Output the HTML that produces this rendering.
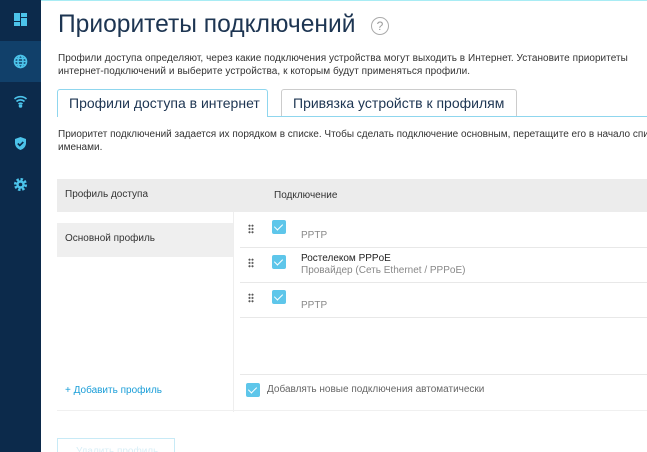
<!DOCTYPE html>
<html><head><meta charset="utf-8"><style>
*{margin:0;padding:0;box-sizing:border-box}
body{width:647px;height:452px;overflow:hidden;background:#fff;font-family:"Liberation Sans",sans-serif;position:relative;color:#333}
.sb{position:absolute;left:0;top:0;width:41px;height:452px;background:#0c2a4b}
.act{position:absolute;left:0;top:41px;width:41px;height:41px;background:#11406a}
.ic{position:absolute;left:13px;width:15px;height:15px}
.a{position:absolute;white-space:nowrap}
.cb{position:absolute;width:14px;height:14px;background:#5ec6ea;border-radius:2px}
.cb:after{content:"";position:absolute;left:4px;top:2px;width:4px;height:7px;border:solid #fff;border-width:0 1.5px 1.5px 0;transform:rotate(45deg)}
.dr{position:absolute;width:6px;height:10px;background-image:radial-gradient(circle,#555 0.9px,transparent 1.1px);background-size:3px 3.3px}
.hl{position:absolute;height:1px;background:#e8e8e8}
</style></head><body>
<div style="position:absolute;left:41px;top:0;right:0;height:1px;background:#a8ecf4"></div>
<div class="sb"></div><div class="act"></div>
<svg class="ic" style="top:12px" viewBox="0 0 15 15"><rect x="1" y="1" width="6" height="8" fill="#4cc3ea"/><rect x="8" y="1" width="6" height="4" fill="#4cc3ea"/><rect x="1" y="10" width="6" height="4" fill="#4cc3ea"/><rect x="8" y="6" width="6" height="8" fill="#4cc3ea"/></svg>
<svg class="ic" style="top:54px" viewBox="0 0 15 15" fill="none" stroke="#4cc3ea" stroke-width="1.6"><circle cx="7.5" cy="7.5" r="6"/><ellipse cx="7.5" cy="7.5" rx="2.5" ry="6"/><path d="M1.5 7.5h12M2.5 4.5h10M2.5 10.5h10"/></svg>
<svg class="ic" style="top:93px" viewBox="0 0 15 15" fill="none" stroke="#4cc3ea" stroke-width="1.6"><path d="M1.5 6a9 9 0 0 1 12 0M3.5 8.5a6 6 0 0 1 8 0M5.5 11a3 3 0 0 1 4 0"/><circle cx="7.5" cy="13" r="1" fill="#4cc3ea"/></svg>
<svg class="ic" style="top:136px" viewBox="0 0 15 15"><path d="M7.5 1L13 3v4c0 3.5-2.5 6-5.5 7C4.5 13 2 10.5 2 7V3z" fill="#4cc3ea"/><path d="M4.8 7.5l2 2 3.5-3.5" fill="none" stroke="#0c2a4b" stroke-width="1.6"/></svg>
<svg class="ic" style="top:177px" viewBox="0 0 15 15"><circle cx="7.5" cy="7.5" r="4.8" fill="none" stroke="#4cc3ea" stroke-width="3.5" stroke-dasharray="2.2 1.55"/><circle cx="7.5" cy="7.5" r="4.2" fill="#4cc3ea"/><circle cx="7.5" cy="7.5" r="1.8" fill="#0c2a4b"/></svg>
<div class="a" style="left:58px;top:11px;font-size:24.6px;color:#1d3552">Приоритеты подключений</div>
<div class="a" style="left:371px;top:17px;width:18px;height:18px;border:1px solid #aaa;border-radius:50%;font-size:12px;color:#999;text-align:center;line-height:16px">?</div>
<div class="a" style="left:58px;top:52px;font-size:10px;line-height:13px;color:#333;letter-spacing:0.05px">Профили доступа определяют, через какие подключения устройства могут выходить в Интернет. Установите приоритеты<br>интернет-подключений и выберите устройства, к которым будут применяться профили.</div>
<div class="a" style="left:57px;top:116px;width:590px;height:1px;background:#8fd6ee"></div>
<div class="a" style="left:57px;top:89px;width:211px;height:28px;border:1px solid #8fd6ee;border-bottom:none;border-radius:3px 3px 0 0;background:#fff;font-size:14px;color:#1d3552;padding:5px 0 0 11px;overflow:hidden">Профили доступа в интернет</div>
<div class="a" style="left:281px;top:89px;width:236px;height:27px;border:1px solid #ccc;border-bottom:none;border-radius:3px 3px 0 0;font-size:14px;color:#1d3552;padding:5px 0 0 11px;overflow:hidden">Привязка устройств к профилям</div>
<div class="a" style="left:58px;top:128px;font-size:10px;line-height:13px">Приоритет подключений задается их порядком в списке. Чтобы сделать подключение основным, перетащите его в начало списка<br>именами.</div>
<div class="a" style="left:57px;top:179px;width:590px;height:33px;background:#ececec"></div>
<div class="a" style="left:65px;top:189px;font-size:10px">Профиль доступа</div>
<div class="a" style="left:274px;top:190px;font-size:10px">Подключение</div>
<div class="a" style="left:57px;top:223px;width:176px;height:34px;background:#efefef"></div>
<div class="a" style="left:65px;top:233px;font-size:10px">Основной профиль</div>
<div class="a" style="left:233px;top:212px;width:1px;height:200px;background:#eee"></div>
<div class="hl" style="left:57px;top:410px;width:590px;background:#f0f0f0"></div>
<div class="dr" style="left:248px;top:224px"></div><div class="cb" style="left:272px;top:220px"></div>
<div class="a" style="left:301px;top:230px;font-size:10px;color:#888">PPTP</div>
<div class="hl" style="left:240px;top:247px;width:407px"></div>
<div class="dr" style="left:248px;top:258px"></div><div class="cb" style="left:272px;top:255px"></div>
<div class="a" style="left:301px;top:253px;font-size:10px;color:#222">Ростелеком PPPoE</div>
<div class="a" style="left:301px;top:265px;font-size:10px;color:#888">Провайдер (Сеть Ethernet / PPPoE)</div>
<div class="hl" style="left:240px;top:282px;width:407px"></div>
<div class="dr" style="left:248px;top:293px"></div><div class="cb" style="left:272px;top:290px"></div>
<div class="a" style="left:301px;top:300px;font-size:10px;color:#888">PPTP</div>
<div class="hl" style="left:240px;top:317px;width:407px"></div>
<div class="hl" style="left:240px;top:374px;width:407px"></div>
<div class="cb" style="left:246px;top:383px"></div>
<div class="a" style="left:267px;top:384px;font-size:10px;color:#666">Добавлять новые подключения автоматически</div>
<div class="a" style="left:65px;top:385px;font-size:10px;color:#1a9ed8">+ Добавить профиль</div>
<div class="a" style="left:57px;top:438px;width:118px;height:14px;border:1px solid #c8eaf6;border-bottom:none;font-size:10px;color:#d8eef6;padding:7px 0 0 18px;overflow:hidden">Удалить профиль</div>
</body></html>
